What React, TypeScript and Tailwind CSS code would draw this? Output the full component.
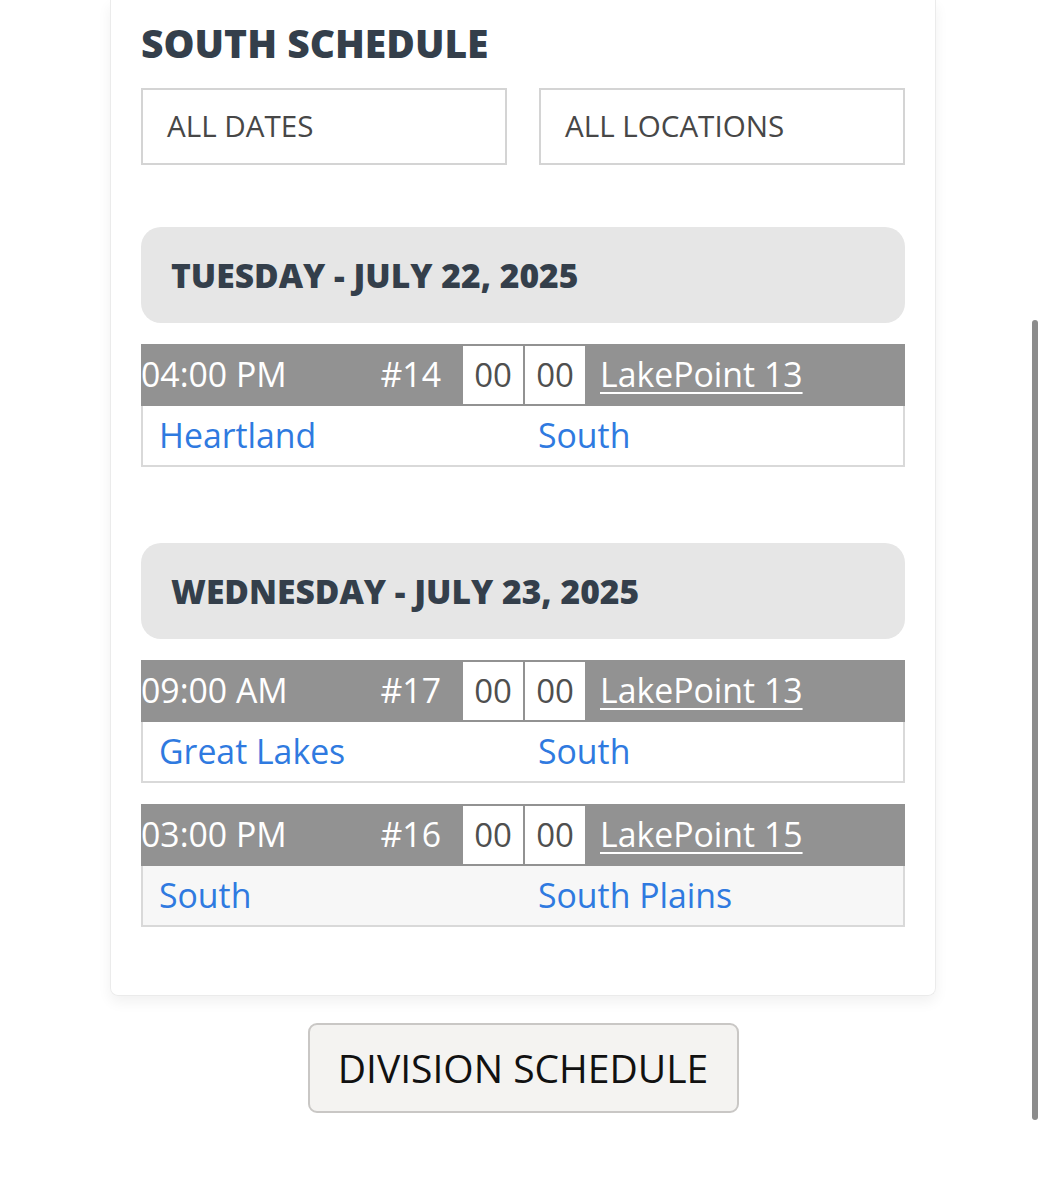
import React from "react";

type Game = {
  time: string;
  num: string;
  loc: string;
  home: string;
  away: string;
  alt?: boolean;
};

type Day = { label: string; games: Game[] };

const days: Day[] = [
  {
    label: "TUESDAY - JULY 22, 2025",
    games: [
      { time: "04:00 PM", num: "#14", loc: "LakePoint 13", home: "Heartland", away: "South" },
    ],
  },
  {
    label: "WEDNESDAY - JULY 23, 2025",
    games: [
      { time: "09:00 AM", num: "#17", loc: "LakePoint 13", home: "Great Lakes", away: "South" },
      { time: "03:00 PM", num: "#16", loc: "LakePoint 15", home: "South", away: "South Plains", alt: true },
    ],
  },
];

function GameRow({ g }: { g: Game }) {
  return (
    <div className="mt-[21px]">
      <div className="flex h-[61.5px] items-center bg-[#929292] text-[33.8px] text-white">
        <div className="w-[229px] whitespace-nowrap">{g.time}</div>
        <div className="w-[93px] pr-[22px] text-right">{g.num}</div>
        <div className="flex gap-[2px] self-stretch py-[2px]">
          <div className="flex w-[60px] items-center justify-center bg-white text-[33px] font-medium text-[#4f4f4f]">00</div>
          <div className="flex w-[60px] items-center justify-center bg-white text-[33px] font-medium text-[#4f4f4f]">00</div>
        </div>
        <a className="pl-[15px] whitespace-nowrap underline decoration-2 underline-offset-[5px]">{g.loc}</a>
      </div>
      <div
        className={
          "grid h-[61.5px] grid-cols-2 items-center border-x-2 border-b-2 border-[#d9d9d9] text-[33.8px] text-[#2f7ae0] " +
          (g.alt ? "bg-[#f7f7f7]" : "bg-white")
        }
      >
        <a className="pl-[16px]">{g.home}</a>
        <a className="pl-[15px]">{g.away}</a>
      </div>
    </div>
  );
}

export default function App() {
  return (
    <div className="relative min-h-[1200px] bg-white font-['Open_Sans',sans-serif]">
      <div className="ml-[110px] w-[826px] rounded-b-[8px] border-x border-b border-[#ebebeb] px-[30px] pt-[20px] pb-[68px] shadow-[0_6px_14px_rgba(0,0,0,0.06)]">
        <h1 className="text-[39px] leading-[46px] font-extrabold text-[#343f4b]">SOUTH SCHEDULE</h1>
        <div className="mt-[22px] grid grid-cols-2 gap-[32px]">
          <div className="flex h-[77px] items-center border-2 border-[#d4d4d4] pl-[24px] text-[29.6px] text-[#474747]">
            ALL DATES
          </div>
          <div className="flex h-[77px] items-center border-2 border-[#d4d4d4] pl-[24px] text-[29.6px] text-[#474747]">
            ALL LOCATIONS
          </div>
        </div>
        <div className="mt-[62px] flex flex-col gap-[76px]">
          {days.map((d) => (
            <div key={d.label}>
              <div className="flex h-[96px] items-center rounded-[20px] bg-[#e6e6e6] pl-[30px] text-[33.6px] font-extrabold text-[#343f4b]">
                {d.label}
              </div>
              {d.games.map((g) => (
                <GameRow key={g.num} g={g} />
              ))}
            </div>
          ))}
        </div>
      </div>
      <div className="mt-[27px] flex justify-center">
        <button className="h-[90px] w-[431px] rounded-[9px] border-2 border-[#c9c7c5] bg-[#f4f3f1] text-[39px] text-[#111111]">
          DIVISION SCHEDULE
        </button>
      </div>
      <div className="absolute top-[320px] right-[8px] h-[800px] w-[6px] rounded-full bg-[#8c8c8c]" />
    </div>
  );
}
